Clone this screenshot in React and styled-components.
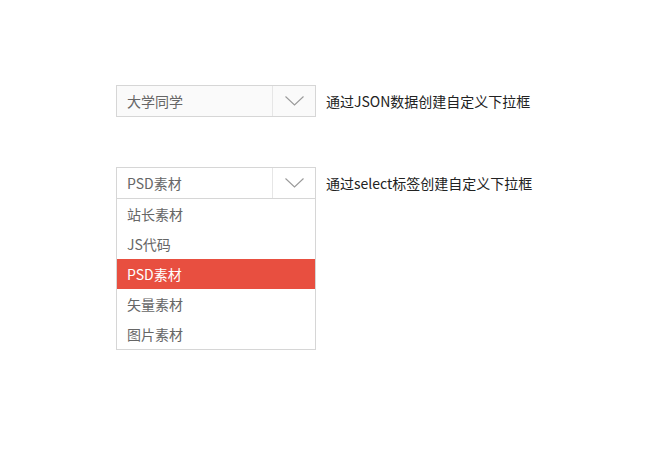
import React, { useState } from "react";
import styled, { createGlobalStyle } from "styled-components";

const GlobalStyle = createGlobalStyle`
  html, body {
    margin: 0;
    padding: 0;
    background: #fff;
  }
  body {
    font-family: "Noto Sans CJK SC", "Noto Sans", sans-serif;
    font-size: 14px;
    color: #333;
  }
`;

const Page = styled.div`
  display: flex;
  flex-direction: column;
  gap: 50px;
  min-height: 449px;
  box-sizing: border-box;
  padding: 85px 0 0 116px;
`;

const Row = styled.div`
  display: flex;
  align-items: flex-start;
  gap: 10px;
`;

const SelectWrap = styled.div`
  display: flex;
  flex-direction: column;
  width: 200px;
  flex: none;
`;

const Head = styled.div`
  display: flex;
  box-sizing: border-box;
  height: 32px;
  border: 1px solid #d6d6d6;
  background: ${(p) => (p.$muted ? "#fafafa" : "#fff")};
  cursor: pointer;
`;

const Value = styled.div`
  flex: 1;
  padding-left: 10px;
  line-height: 30px;
  color: #666;
  white-space: nowrap;
`;

const Arrow = styled.div`
  width: 42px;
  border-left: 1px solid #e6e6e6;
  display: flex;
  align-items: center;
  justify-content: center;
`;

const List = styled.ul`
  display: block;
  box-sizing: border-box;
  margin: 0;
  padding: 0;
  list-style: none;
  border: 1px solid #d6d6d6;
  border-top: none;
  background: #fff;
`;

const Item = styled.li`
  height: 30px;
  line-height: 30px;
  padding-left: 10px;
  color: ${(p) => (p.$active ? "#fff" : "#666")};
  background: ${(p) => (p.$active ? "#e84f40" : "transparent")};
  cursor: pointer;
`;

const Label = styled.span`
  line-height: 32px;
  color: #222;
  white-space: nowrap;
`;

const Chevron = () => (
  <svg width="19" height="10" viewBox="0 0 19 10">
    <polyline points="0.5,0.5 9.5,9 18.5,0.5" fill="none" stroke="#9a9a9a" strokeWidth="1.1" />
  </svg>
);

const options = ["站长素材", "JS代码", "PSD素材", "矢量素材", "图片素材"];

function Select({ value, muted, items, onPick }) {
  return (
    <SelectWrap>
      <Head $muted={muted}>
        <Value>{value}</Value>
        <Arrow>
          <Chevron />
        </Arrow>
      </Head>
      {items.length > 0 ? (
        <List>
          {items.map((o) => (
            <Item key={o} $active={o === value} onClick={() => onPick(o)}>
              {o}
            </Item>
          ))}
        </List>
      ) : null}
    </SelectWrap>
  );
}

export default function App() {
  const [second, setSecond] = useState("PSD素材");

  return (
    <>
      <GlobalStyle />
      <Page>
        <Row>
          <Select value="大学同学" muted items={[]} onPick={() => {}} />
          <Label>通过JSON数据创建自定义下拉框</Label>
        </Row>
        <Row>
          <Select value={second} items={options} onPick={(o) => setSecond(o)} />
          <Label>通过select标签创建自定义下拉框</Label>
        </Row>
      </Page>
    </>
  );
}
